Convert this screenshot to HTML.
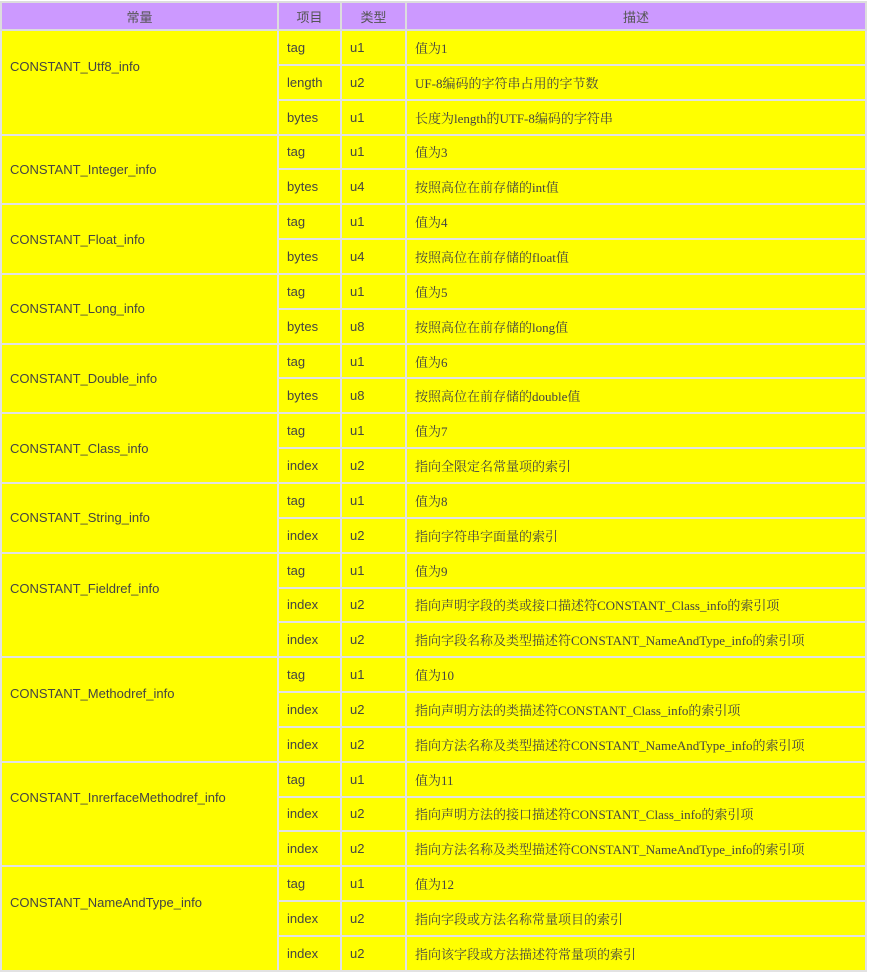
<!DOCTYPE html>
<html><head><meta charset="utf-8"><style>
html,body{margin:0;padding:0;background:#fff;width:870px;height:971px;overflow:hidden}
table{position:absolute;left:0;top:1px;width:867px;border-collapse:collapse;table-layout:fixed;font-family:"Liberation Sans","Noto Sans CJK SC",sans-serif;font-size:13px;color:#444}
tr{height:34.85px}
tr.h{height:28px}
th{background:#cc99ff;font-weight:normal;border:2px solid #ddd;padding:0;color:#555}
td{background:#ffff00;border:2px solid #e2e2e2;padding:0 0 0 8px}
td.d{font-family:"Liberation Serif","Noto Serif CJK SC",serif;color:#444}
td.t{padding-bottom:32px}
</style></head><body>
<table>
<colgroup><col style="width:277px"><col style="width:63px"><col style="width:65px"><col></colgroup>
<tr class="h"><th>常量</th><th>项目</th><th>类型</th><th>描述</th></tr>
<tr><td rowspan="3" class="t">CONSTANT_Utf8_info</td><td>tag</td><td>u1</td><td class="d">值为1</td></tr>
<tr><td>length</td><td>u2</td><td class="d">UF-8编码的字符串占用的字节数</td></tr>
<tr><td>bytes</td><td>u1</td><td class="d">长度为length的UTF-8编码的字符串</td></tr>
<tr><td rowspan="2">CONSTANT_Integer_info</td><td>tag</td><td>u1</td><td class="d">值为3</td></tr>
<tr><td>bytes</td><td>u4</td><td class="d">按照高位在前存储的int值</td></tr>
<tr><td rowspan="2">CONSTANT_Float_info</td><td>tag</td><td>u1</td><td class="d">值为4</td></tr>
<tr><td>bytes</td><td>u4</td><td class="d">按照高位在前存储的float值</td></tr>
<tr><td rowspan="2">CONSTANT_Long_info</td><td>tag</td><td>u1</td><td class="d">值为5</td></tr>
<tr><td>bytes</td><td>u8</td><td class="d">按照高位在前存储的long值</td></tr>
<tr><td rowspan="2">CONSTANT_Double_info</td><td>tag</td><td>u1</td><td class="d">值为6</td></tr>
<tr><td>bytes</td><td>u8</td><td class="d">按照高位在前存储的double值</td></tr>
<tr><td rowspan="2">CONSTANT_Class_info</td><td>tag</td><td>u1</td><td class="d">值为7</td></tr>
<tr><td>index</td><td>u2</td><td class="d">指向全限定名常量项的索引</td></tr>
<tr><td rowspan="2">CONSTANT_String_info</td><td>tag</td><td>u1</td><td class="d">值为8</td></tr>
<tr><td>index</td><td>u2</td><td class="d">指向字符串字面量的索引</td></tr>
<tr><td rowspan="3" class="t">CONSTANT_Fieldref_info</td><td>tag</td><td>u1</td><td class="d">值为9</td></tr>
<tr><td>index</td><td>u2</td><td class="d">指向声明字段的类或接口描述符CONSTANT_Class_info的索引项</td></tr>
<tr><td>index</td><td>u2</td><td class="d">指向字段名称及类型描述符CONSTANT_NameAndType_info的索引项</td></tr>
<tr><td rowspan="3" class="t">CONSTANT_Methodref_info</td><td>tag</td><td>u1</td><td class="d">值为10</td></tr>
<tr><td>index</td><td>u2</td><td class="d">指向声明方法的类描述符CONSTANT_Class_info的索引项</td></tr>
<tr><td>index</td><td>u2</td><td class="d">指向方法名称及类型描述符CONSTANT_NameAndType_info的索引项</td></tr>
<tr><td rowspan="3" class="t">CONSTANT_InrerfaceMethodref_info</td><td>tag</td><td>u1</td><td class="d">值为11</td></tr>
<tr><td>index</td><td>u2</td><td class="d">指向声明方法的接口描述符CONSTANT_Class_info的索引项</td></tr>
<tr><td>index</td><td>u2</td><td class="d">指向方法名称及类型描述符CONSTANT_NameAndType_info的索引项</td></tr>
<tr><td rowspan="3" class="t">CONSTANT_NameAndType_info</td><td>tag</td><td>u1</td><td class="d">值为12</td></tr>
<tr><td>index</td><td>u2</td><td class="d">指向字段或方法名称常量项目的索引</td></tr>
<tr><td>index</td><td>u2</td><td class="d">指向该字段或方法描述符常量项的索引</td></tr>
</table>
</body></html>
